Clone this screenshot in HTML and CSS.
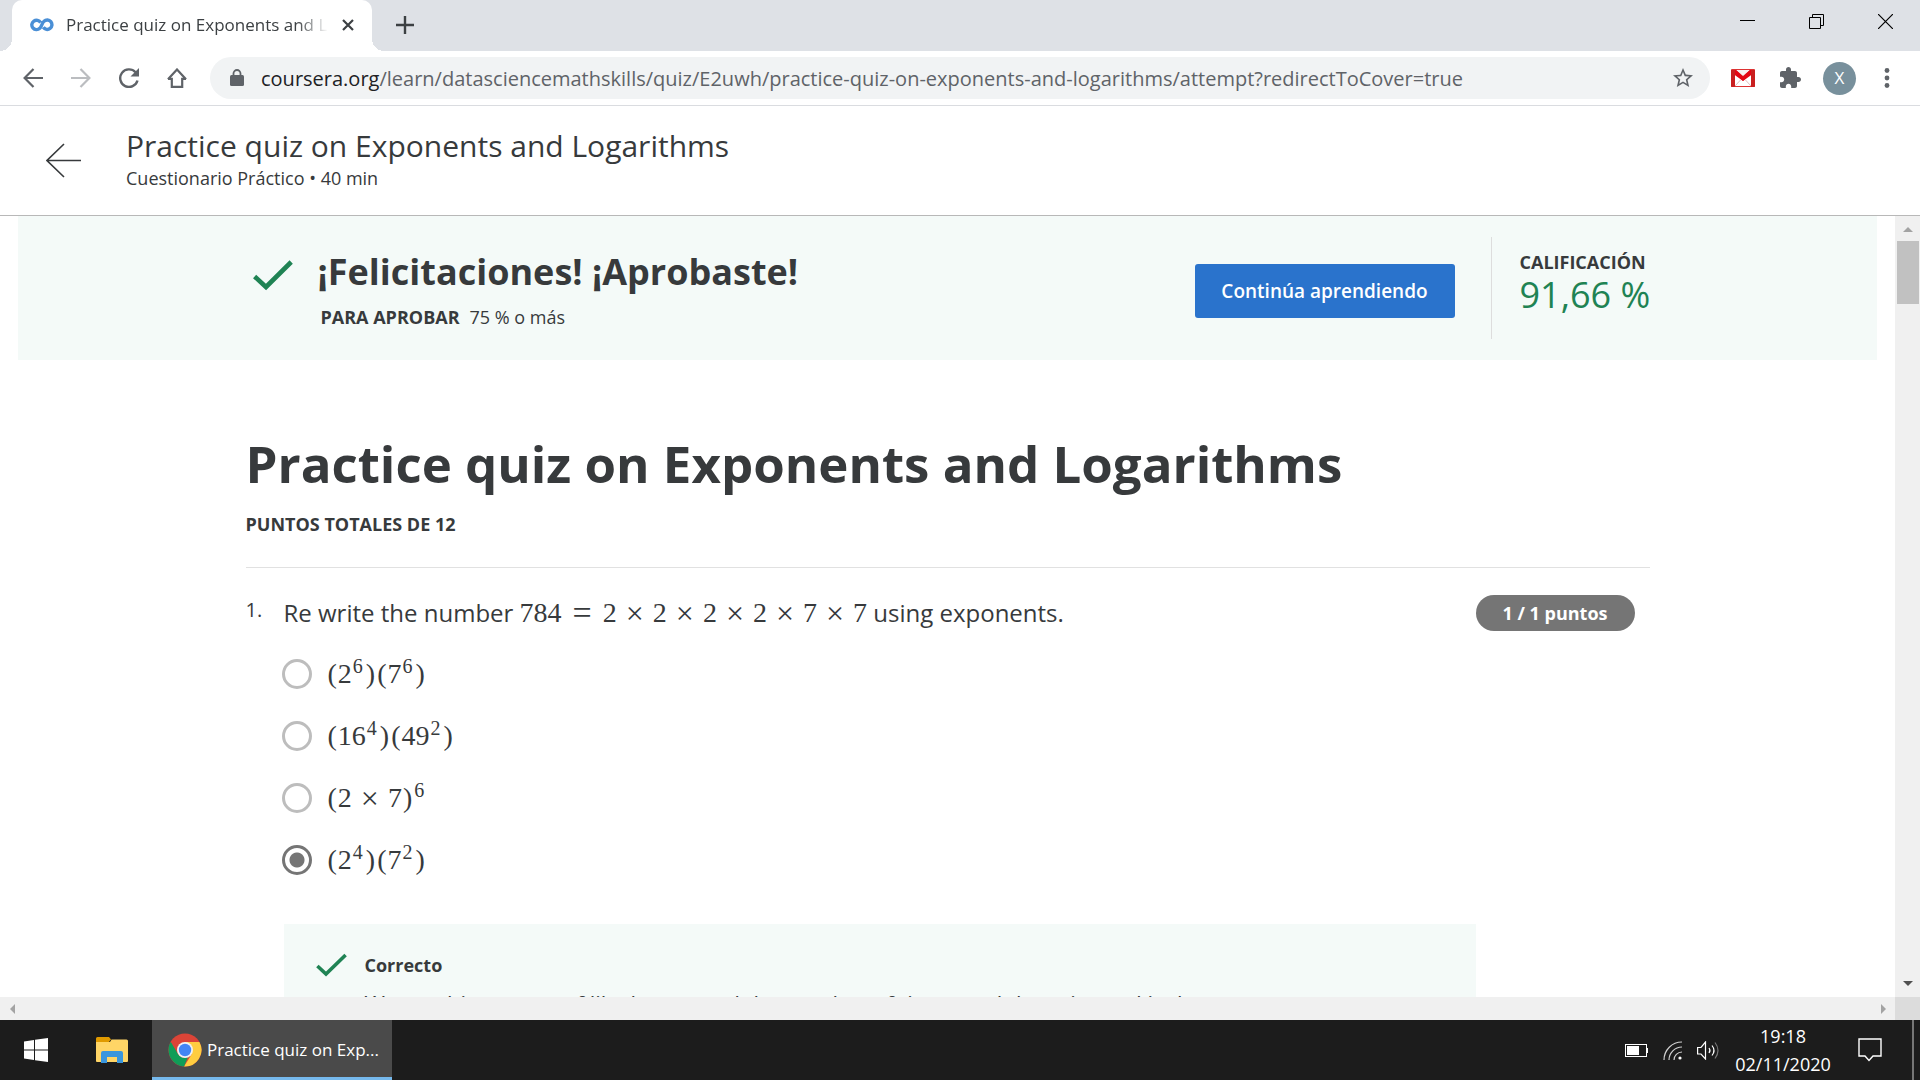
FILE: index.html
```html
<!DOCTYPE html>
<html lang="es">
<head>
<meta charset="utf-8">
<title>Practice quiz on Exponents and Logarithms</title>
<link rel="stylesheet" href="styles.css">
</head>
<body>
<div class="tabstrip">
  <div class="tab">
    <svg class="favicon" width="24" height="14" viewBox="0 0 24 14" fill="none" stroke="#4a8fd6" stroke-width="3.4"><path d="M10.600 4.600A4.700 4.700 0 1 0 9.800 10.300C11.500 8.800 12 5 14 3.300A4.700 4.700 0 1 1 13.300 9.300"/></svg>
    <span class="tab-title">Practice quiz on Exponents and Logarithms</span>
    <button class="icon-button" aria-label="Cerrar pestaña"><svg width="12" height="12" viewBox="0 0 12 12" stroke="#3c4043" stroke-width="2.2"><path d="M1 1l10 10M11 1 1 11"/></svg></button>
  </div>
  <button class="icon-button new-tab" aria-label="Nueva pestaña"><svg width="18" height="18" viewBox="0 0 18 18" stroke="#3c4043" stroke-width="2.4"><path d="M9 0v18M0 9h18"/></svg></button>
  <div class="window-controls">
    <button class="icon-button" aria-label="Minimizar"><svg width="15" height="15" viewBox="0 0 15 15" stroke="#000"><path d="M0 6.5h15"/></svg></button>
    <button class="icon-button" aria-label="Restaurar"><svg width="15" height="15" viewBox="0 0 15 15" fill="none" stroke="#000"><path d="M.5 3.500h11v11H.5zM3.500 3V.5h11v11H12"/></svg></button>
    <button class="icon-button" aria-label="Cerrar"><svg width="15" height="15" viewBox="0 0 15 15" stroke="#000" stroke-width="1.200"><path d="M0 0l15 15M15 0 0 15"/></svg></button>
  </div>
</div>

<div class="toolbar">
  <div class="nav-buttons">
    <button class="icon-button" aria-label="Atrás"><svg width="20" height="20" viewBox="0 0 20 20" fill="none" stroke="#5f6368" stroke-width="2.200"><path d="M20 10H2M10.500 1 1.600 10l8.900 9"/></svg></button>
    <button class="icon-button" aria-label="Adelante"><svg width="20" height="20" viewBox="0 0 20 20" fill="none" stroke="#bbbdc0" stroke-width="2.200"><path d="M0 10h18M9.500 1l8.900 9-8.900 9"/></svg></button>
    <button class="icon-button" aria-label="Recargar"><svg width="20" height="20" viewBox="0 0 20 20" fill="none" stroke="#5f6368" stroke-width="2.400"><path d="M18.500 12.500A8.800 8.800 0 1 1 16.500 4.200"/><path d="M20 0v8.500h-8.500z" fill="#5f6368" stroke="none"/></svg></button>
    <button class="icon-button" aria-label="Inicio"><svg width="20" height="20" viewBox="0 0 20 20" fill="none" stroke="#5f6368" stroke-width="2.200"><path d="M1 11.200 10 1.500l9 9.700M1 10.800h3.800v8h10.400v-8H19"/></svg></button>
  </div>
  <div class="omnibox">
    <svg width="14" height="18" viewBox="0 0 14 18"><path d="M3.500 7V4.500a3.500 3.500 0 0 1 7 0V7" fill="none" stroke="#5f6368" stroke-width="1.800"/><rect y="6" width="14" height="11" rx="1.500" fill="#5f6368"/></svg>
    <a class="url" href="#"><span class="host">coursera.org</span>/learn/datasciencemathskills/quiz/E2uwh/practice-quiz-on-exponents-and-logarithms/attempt?redirectToCover=true</a>
    <button class="icon-button" aria-label="Favorito"><svg width="22" height="22" viewBox="1 1 22 22" fill="#5f6368"><path d="M22 9.240l-7.190-.620L12 2 9.190 8.630 2 9.240l5.460 4.730L5.820 21 12 17.270 18.180 21l-1.630-7.030L22 9.240zM12 15.400l-3.760 2.270 1-4.280-3.320-2.880 4.380-.380L12 6.100l1.710 4.040 4.380.380-3.320 2.880 1 4.280L12 15.400z"/></svg></button>
  </div>
  <div class="extensions">
    <button class="icon-button" aria-label="Gmail"><svg width="24" height="18" viewBox="0 0 24 18"><rect width="24" height="18" rx="1" fill="#d33"/><path d="M4 4v13h16V4l-8 8z" fill="#fff"/><path d="M4 17l5.500-6M20 17l-5.500-6" stroke="#e3bcbc" fill="none"/><path d="M5 1h14l-7 6z" fill="#f7f0f0"/><path d="M1 1h4l7 6.500L19 1h4v3L12 12 1 4z" fill="#e30613"/><path d="M0 1h4v17H1a1 1 0 0 1-1-1zM20 1h4v16a1 1 0 0 1-1 1h-3z" fill="#c91f1f"/></svg></button>
    <button class="icon-button" aria-label="Extensiones"><svg width="22" height="22" viewBox="1 1 22 22" fill="#5f6368"><path d="M20.500 11H19V7c0-1.100-.900-2-2-2h-4V3.500C13 2.120 11.880 1 10.500 1S8 2.120 8 3.500V5H4c-1.100 0-1.990.900-1.990 2v3.800H3.500c1.490 0 2.700 1.210 2.700 2.700s-1.210 2.700-2.700 2.700H2V20c0 1.100.900 2 2 2h3.800v-1.500c0-1.490 1.210-2.700 2.700-2.700 1.490 0 2.700 1.210 2.700 2.700V22H17c1.100 0 2-.900 2-2v-4h1.500c1.380 0 2.500-1.120 2.500-2.500S21.880 11 20.500 11z"/></svg></button>
    <button class="avatar" aria-label="Perfil">X</button>
    <button class="icon-button" aria-label="Menú"><svg width="6" height="20" viewBox="0 0 6 20" fill="#5f6368"><circle cx="3" cy="2.500" r="2.400"/><circle cx="3" cy="10" r="2.400"/><circle cx="3" cy="17.500" r="2.400"/></svg></button>
  </div>
</div>

<header class="quiz-header">
  <button class="icon-button" aria-label="Volver"><svg width="35" height="35" viewBox="0 0 35 35" fill="none" stroke="#373a3c" stroke-width="1.600"><path d="M35 17.500H1M18 1 1 17.500 18 34"/></svg></button>
  <div class="quiz-heading">
    <div class="quiz-name">Practice quiz on Exponents and Logarithms</div>
    <div class="quiz-kind">Cuestionario Práctico • 40 min</div>
  </div>
</header>

<div class="viewport">
  <main class="page">
    <section class="banner">
      <div class="content banner-row">
        <svg class="banner-check" width="40" height="31" viewBox="0 0 40 31" fill="none" stroke="#1f8354" stroke-width="4.600"><path d="M1.600 16.500 13 27 38.200 2"/></svg>
        <div class="banner-text">
          <h2>¡Felicitaciones! ¡Aprobaste!</h2>
          <p><strong>PARA APROBAR</strong><span>75 % o más</span></p>
        </div>
        <button class="continue">Continúa aprendiendo</button>
        <div class="grade">
          <strong>CALIFICACIÓN</strong>
          <span class="grade-value">91,66 %</span>
        </div>
      </div>
    </section>

    <section class="content quiz">
      <h1>Practice quiz on Exponents and Logarithms</h1>
      <div class="total"><strong>PUNTOS TOTALES DE 12</strong></div>
      <div class="question">
        <div class="number">1.</div>
        <fieldset class="question-body">
          <legend>Re write the number <span class="math">784<i class="equals">=</i>2<i>×</i>2<i>×</i>2<i>×</i>2<i>×</i>7<i>×</i>7</span> using exponents.</legend>
          <label><input type="radio" name="q1"><span class="math"><b>(</b>2<sup>6</sup><b>)</b><b>(</b>7<sup>6</sup><b>)</b></span></label>
          <label><input type="radio" name="q1"><span class="math"><b>(</b>16<sup>4</sup><b>)</b><b>(</b>49<sup>2</sup><b>)</b></span></label>
          <label><input type="radio" name="q1"><span class="math"><b>(</b>2<i>×</i>7<b>)</b><sup>6</sup></span></label>
          <label><input type="radio" name="q1" checked><span class="math"><b>(</b>2<sup>4</sup><b>)</b><b>(</b>7<sup>2</sup><b>)</b></span></label>
          <div class="feedback">
            <svg width="31" height="24" viewBox="0 0 31 24" fill="none" stroke="#1f8354" stroke-width="3.600"><path d="M1.400 13 10 21 29.600 2"/></svg>
            <div>
              <strong>Correcto</strong>
              <p>We combine terms of like bases, and the number of times each base is used is the exponent.</p>
            </div>
          </div>
        </fieldset>
        <div class="points">1 / 1 puntos</div>
      </div>
    </section>
  </main>
  <div class="scroll-y">
    <svg width="10" height="5" viewBox="0 0 10 5" fill="#a3a3a3"><path d="M0 5 5 0l5 5z"/></svg>
    <div class="thumb"></div>
    <svg class="scroll-end" width="10" height="5" viewBox="0 0 10 5" fill="#505050"><path d="M0 0h10L5 5z"/></svg>
  </div>
</div>
<div class="scroll-x">
  <div class="track">
    <svg width="5" height="10" viewBox="0 0 5 10" fill="#a3a3a3"><path d="M5 0v10L0 5z"/></svg>
    <svg width="5" height="10" viewBox="0 0 5 10" fill="#a3a3a3"><path d="M0 0v10l5-5z"/></svg>
  </div>
  <div class="corner"></div>
</div>

<footer class="taskbar">
  <button class="icon-button launcher" aria-label="Inicio de Windows"><svg width="24" height="24" viewBox="0 0 24 24" fill="#fff"><path d="M0 3.400 10 2v9.500H0zM11 1.800 24 0v11.500H11zM0 12.500h10V22L0 20.600zM11 12.500h13V24l-13-1.800z"/></svg></button>
  <button class="icon-button launcher" aria-label="Explorador de archivos"><svg width="32" height="27" viewBox="0 0 32 27"><path d="M0 1.500A1.500 1.500 0 0 1 1.500 0H13l2 2.500H0z" fill="#e09a00"/><path d="M0 5h14l1.500-2.500h15A1.500 1.500 0 0 1 32 4v20a1 1 0 0 1-1 1H1a1 1 0 0 1-1-1z" fill="#ffd566"/><path d="M0 2h15l-2 3H0z" fill="#e09a00"/><path d="M5 26V16a2 2 0 0 1 2-2h18a2 2 0 0 1 2 2v10h-6v-6H11v6z" fill="#3a96dd"/></svg></button>
  <button class="task">
    <svg width="34" height="34" viewBox="0 0 34 34"><circle cx="17" cy="17" r="16.500" fill="#db4437"/><path d="M17 9h14.400A16.500 16.500 0 0 1 16 33.500l7.500-12z" fill="#ffcd40"/><path d="M2.700 8.800 10.300 21.500A7.600 7.600 0 0 0 20 24l-4 9.500A16.500 16.500 0 0 1 2.700 8.800z" fill="#0f9d58"/><circle cx="17" cy="17" r="8" fill="#f1f1f1"/><circle cx="17" cy="17" r="6.200" fill="#4285f4"/></svg>
    <span>Practice quiz on Exp...</span>
  </button>
  <div class="tray">
    <svg width="23" height="13" viewBox="0 0 23 13"><rect x=".5" y=".5" width="21" height="12" fill="none" stroke="#fff"/><path d="M2 2h12v9H2zM22 4h1v5h-1z" fill="#fff"/></svg>
    <svg width="19" height="19" viewBox="0 0 19 19" fill="none" stroke="#fff" stroke-width="1.200"><path d="M1 19A18 18 0 0 1 19 1M6 19A13 13 0 0 1 19 6M11 19a8 8 0 0 1 8-8" opacity=".8"/><circle cx="17" cy="17" r="1.600" fill="#fff" stroke="none"/></svg>
    <svg width="23" height="19" viewBox="0 0 23 19" fill="none" stroke="#fff" stroke-width="1.200"><path d="M.600 6.500H4L8.500 1v17L4 13H.600z"/><path d="M12 7q2 2.500 0 5M15 4.500q4 5 0 10"/><path d="M18 1.500q6 8 0 16" opacity=".4"/></svg>
  </div>
  <div class="clock"><span>19:18</span><span>02/11/2020</span></div>
  <button class="icon-button notifications" aria-label="Notificaciones"><svg width="24" height="24" viewBox="0 0 24 24" fill="none" stroke="#fff" stroke-width="1.400"><path d="M1 1h22v17h-8l-4 4.500L7 18H1z"/></svg></button>
  <div class="show-desktop"></div>
</footer>
</body>
</html>
```
FILE: styles.css
```css
* { box-sizing: border-box; }

body {
  margin: 0;
  height: 100vh;
  display: flex;
  flex-direction: column;
  overflow: hidden;
  background: #fff;
  color: #373a3c;
  font: 18px/24px "Open Sans", "Noto Sans", sans-serif;
}

h1, h2, p { margin: 0; }
button { font: inherit; border: 0; padding: 0; }
svg { display: block; flex: none; }
strong { font-weight: 700; }

.icon-button { background: none; display: flex; flex: none; }

/* Browser tabs */
.tabstrip {
  height: 51px;
  flex: none;
  display: flex;
  align-items: center;
  background: #dee1e6;
  padding-left: 12px;
}
.tab {
  flex: 0 1 360px;
  min-width: 0;
  height: 51px;
  display: flex;
  align-items: center;
  padding: 0 18px 2px;
  background: #fff;
  border-radius: 10px 10px 0 0;
  position: relative;
}
.tab::before, .tab::after {
  content: "";
  position: absolute;
  bottom: 0;
  width: 12px;
  height: 12px;
}
.tab::before { left: -12px; background: radial-gradient(circle at 0 0, #dee1e6 12px, #fff 12px); }
.tab::after { right: -12px; background: radial-gradient(circle at 100% 0, #dee1e6 12px, #fff 12px); }
.tab-title {
  flex: 1;
  min-width: 0;
  margin: 0 14px 0 12px;
  overflow: hidden;
  white-space: nowrap;
  font-size: 17px;
  color: #3c4043;
  -webkit-mask-image: linear-gradient(to right, #000 88%, transparent);
  mask-image: linear-gradient(to right, #000 88%, transparent);
}
.new-tab { margin: 0 0 2px 24px; }
.window-controls {
  margin-left: auto;
  align-self: flex-start;
  display: flex;
  gap: 54px;
  padding: 14px 27px 0 0;
}

/* Browser toolbar */
.toolbar {
  height: 55px;
  flex: none;
  display: flex;
  align-items: center;
  padding: 0 30px 0 23px;
  border-bottom: 1px solid #dadce0;
}
.nav-buttons { display: flex; gap: 28px; }
.omnibox {
  flex: 1;
  min-width: 0;
  height: 42px;
  margin: 0 21px 0 23px;
  padding: 0 16px 0 20px;
  display: flex;
  align-items: center;
  gap: 17px;
  background: #f1f3f4;
  border-radius: 21px;
}
.url {
  flex: 1;
  min-width: 0;
  padding-top: 1px;
  overflow: hidden;
  white-space: nowrap;
  font-size: 20px;
  line-height: 28px;
  color: #5f6368;
  text-decoration: none;
}
.host { color: #202124; }
.extensions { display: flex; align-items: center; gap: 24px; }
.avatar {
  width: 33px;
  height: 33px;
  border-radius: 50%;
  background: #78909c;
  color: #fff;
  font-size: 17px;
  margin: 0 4px 0 -2px;
}

/* Quiz header */
.quiz-header {
  height: 110px;
  flex: none;
  display: flex;
  align-items: center;
  gap: 45px;
  padding: 0 46px;
  border-bottom: 1px solid #b8b8b8;
}
.quiz-heading { padding-bottom: 6px; }
.quiz-name { font-size: 30px; line-height: 40px; }
.quiz-kind { font-size: 18px; line-height: 24px; }

.viewport { flex: 1; min-height: 0; display: flex; }
.page { flex: 1; min-width: 0; overflow: hidden; }
.content { max-width: 1404px; margin: 0 auto; }

/* Result banner */
.banner { margin: 0 18px; background: #f4faf8; }
.banner-row {
  height: 144px;
  display: flex;
  align-items: center;
  padding: 0 0 0 7px;
}
.banner-check { margin-bottom: 26px; }
.banner-text { flex: 1; padding-left: 25px; }
.banner-text h2 { font-size: 36px; line-height: 48px; font-weight: 700; }
.banner-text p { margin-top: 9px; padding-left: 3px; display: flex; gap: 10px; }
.continue {
  width: 260px;
  height: 54px;
  margin-top: 6px;
  border-radius: 3px;
  background: #2a73cc;
  color: #fff;
  font-size: 19px;
  font-weight: 600;
}
.grade {
  width: 159px;
  height: 102px;
  margin-left: 36px;
  padding: 13px 0 0 28px;
  border-left: 1px solid #ddd;
  white-space: nowrap;
  display: flex;
  flex-direction: column;
}
.grade-value { font-size: 36px; line-height: 42px; color: #1f8354; }

/* Questions */
.quiz { padding-top: 69px; }
.quiz h1 { font-size: 51px; line-height: 68px; font-weight: 700; white-space: nowrap; }
.total { margin-top: 15px; padding-bottom: 31px; border-bottom: 1px solid #e1e1e1; }
.question { display: flex; padding: 23px 15px 0 0; }
.number { width: 38px; flex: none; font-size: 20px; line-height: 38px; }
.question-body { flex: 1; min-width: 0; margin: 0; padding: 0; border: 0; }
.question-body legend { padding: 0; font-size: 24px; line-height: 44px; white-space: nowrap; }
.question-body label {
  display: flex;
  align-items: center;
  gap: 15px;
  height: 32px;
  margin: 0 0 30px -2px;
}
.question-body label:first-of-type { margin-top: 23px; }
.question-body input {
  appearance: none;
  width: 30px;
  height: 30px;
  flex: none;
  margin: 0;
  border: 3px solid #bdbdbd;
  border-radius: 50%;
}
.question-body input:checked {
  border-color: #757575;
  background: radial-gradient(circle, #757575 7px, #fff 8px);
}
.math { font: 28px/32px "Liberation Serif", serif; }
.math i { font-style: normal; font-size: 32px; line-height: 0; vertical-align: -2px; padding: 0 9px; }
.math .equals { font-size: 34px; padding: 0 11px; }
.math b { font-weight: 400; padding: 0 1px; }
.math sup { font-size: 20px; line-height: 0; vertical-align: 10px; padding: 0 2px 0 1px; }
.feedback {
  display: flex;
  gap: 18px;
  margin-top: 48px;
  padding: 29px 32px;
  background: #f4faf8;
}
.feedback p { margin-top: 10px; font-size: 22px; line-height: 32px; }
.points {
  width: 159px;
  height: 36px;
  flex: none;
  margin-top: 4px;
  border-radius: 18px;
  background: #757575;
  color: #fff;
  font-weight: 700;
  line-height: 36px;
  text-align: center;
}

/* Scroll bars */
.scroll-y {
  width: 25px;
  flex: none;
  display: flex;
  flex-direction: column;
  align-items: center;
  padding: 11px 0 11px;
  background: #f0f0f0;
}
.thumb { width: 22px; height: 63px; margin-top: 9px; background: #c1c1c1; }
.scroll-end { margin-top: auto; }
.scroll-x { height: 23px; flex: none; display: flex; }
.track {
  flex: 1;
  display: flex;
  align-items: center;
  justify-content: space-between;
  padding: 0 9px 0 10px;
  background: #f0f0f0;
}
.corner { width: 25px; background: #dcdcdc; }

/* Windows taskbar */
.taskbar {
  height: 60px;
  flex: none;
  display: flex;
  align-items: center;
  background: #1c1c1c;
  color: #fff;
}
.launcher { width: 72px; justify-content: center; }
.launcher + .launcher { width: 80px; }
.task {
  width: 240px;
  height: 60px;
  display: flex;
  align-items: center;
  gap: 5px;
  padding: 2px 16px 0;
  background: #4a4a4a;
  border-bottom: 3px solid #76b9ed;
  color: #fff;
  font-size: 17px;
  white-space: nowrap;
}
.tray { margin-left: auto; display: flex; align-items: center; gap: 15px; }
.clock {
  width: 126px;
  display: flex;
  flex-direction: column;
  text-align: center;
  line-height: 28px;
}
.notifications { margin: 0 30px 0 12px; }
.show-desktop { width: 8px; height: 60px; border-left: 2px solid #767676; }
```
